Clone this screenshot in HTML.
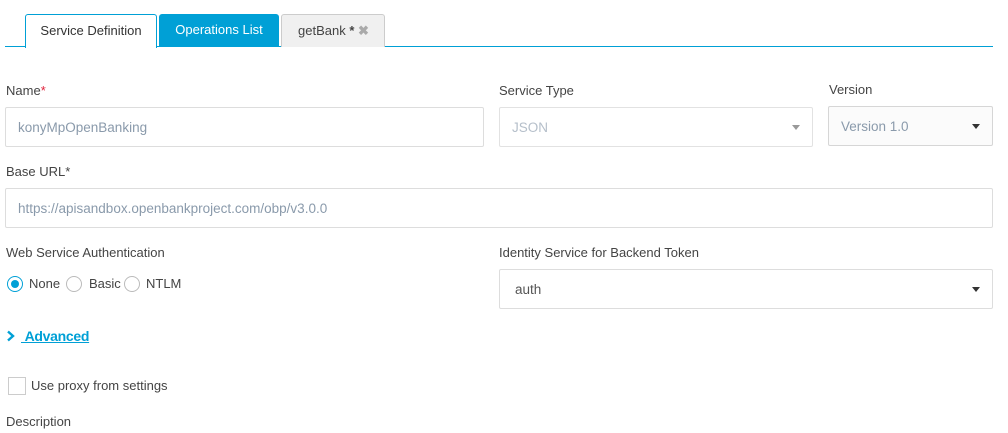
<!DOCTYPE html>
<html><head><style>
body{margin:0;width:1008px;height:433px;background:#fff;font-family:"Liberation Sans",sans-serif;font-size:13px;color:#444;position:relative;overflow:hidden}
.a{position:absolute}
.lbl{position:absolute;font-size:13px;color:#444;line-height:16px}
.in{position:absolute;box-sizing:border-box;border:1px solid #ddd;border-radius:2px;background:#fff;color:#8a9aab;font-size:13.5px;padding-left:12px;display:flex;align-items:center}
.caret{position:absolute;right:12px;top:50%;margin-top:-2px;width:0;height:0;border-left:4px solid transparent;border-right:4px solid transparent;border-top:5px solid #333}
.radio{position:absolute;width:16px;height:16px;border:1px solid #bbb;border-radius:50%;box-sizing:border-box;background:#fff}
</style></head><body>
<div class="a" style="left:5px;top:46px;width:988px;height:1px;background:#00a0d6"></div>
<div class="a" style="left:25px;top:14px;width:132px;height:34px;box-sizing:border-box;border:1px solid #00a0d6;border-bottom:none;border-radius:3px 3px 0 0;background:#fff;text-align:center;line-height:32px;color:#333">Service Definition</div>
<div class="a" style="left:159px;top:14px;width:120px;height:33px;background:#00a0d6;border-radius:3px 3px 0 0;text-align:center;line-height:32px;color:#fff">Operations List</div>
<div class="a" style="left:281px;top:14px;width:104px;height:33px;box-sizing:border-box;border:1px solid #ccc;border-bottom:none;background:#f0f0f0;border-radius:3px 3px 0 0;line-height:32px;padding-left:16px;color:#444">getBank <b>*</b> <span style="color:#aaa;font-weight:bold">✖</span></div>

<div class="lbl" style="left:6px;top:83px">Name<span style="color:#e0233c">*</span></div>
<div class="in" style="left:5px;top:107px;width:479px;height:40px">konyMpOpenBanking</div>
<div class="lbl" style="left:499px;top:83px">Service Type</div>
<div class="in" style="left:499px;top:107px;width:314px;height:40px;color:#b5bfca;border-color:#e2e2e2">JSON<div class="caret" style="border-top-color:#999"></div></div>
<div class="lbl" style="left:829px;top:82px">Version</div>
<div class="in" style="left:828px;top:106px;width:165px;height:40px;background:#fbfbfb;border-color:#d6d6d6">Version 1.0<div class="caret"></div></div>

<div class="lbl" style="left:6px;top:164px">Base URL*</div>
<div class="in" style="left:5px;top:188px;width:988px;height:40px">https://apisandbox.openbankproject.com/obp/v3.0.0</div>

<div class="lbl" style="left:6px;top:245px">Web Service Authentication</div>
<span class="radio" style="left:7px;top:276px;border-color:#00a0d6"><span class="a" style="left:3px;top:3px;width:8px;height:8px;border-radius:50%;background:#00a0d6"></span></span>
<div class="lbl" style="left:29px;top:276px">None</div>
<span class="radio" style="left:66px;top:276px"></span>
<div class="lbl" style="left:89px;top:276px">Basic</div>
<span class="radio" style="left:124px;top:276px"></span>
<div class="lbl" style="left:146px;top:276px">NTLM</div>
<div class="lbl" style="left:499px;top:245px">Identity Service for Backend Token</div>
<div class="in" style="left:499px;top:269px;width:494px;height:40px;color:#555;padding-left:15px">auth<div class="caret"></div></div>

<svg class="a" style="left:6px;top:330px" width="10" height="12"><path d="M2 1.5 L7 6 L2 10.5" fill="none" stroke="#00a0d6" stroke-width="2.4"/></svg>
<div class="a" style="left:21px;top:328px;color:#00a0d6;font-size:14px;text-decoration:underline;font-weight:bold;letter-spacing:-0.3px">&nbsp;Advanced</div>

<div class="a" style="left:8px;top:377px;width:18px;height:18px;box-sizing:border-box;border:1px solid #ccc;background:#fff"></div>
<div class="lbl" style="left:31px;top:378px">Use proxy from settings</div>
<div class="lbl" style="left:6px;top:414px">Description</div>
</body></html>
